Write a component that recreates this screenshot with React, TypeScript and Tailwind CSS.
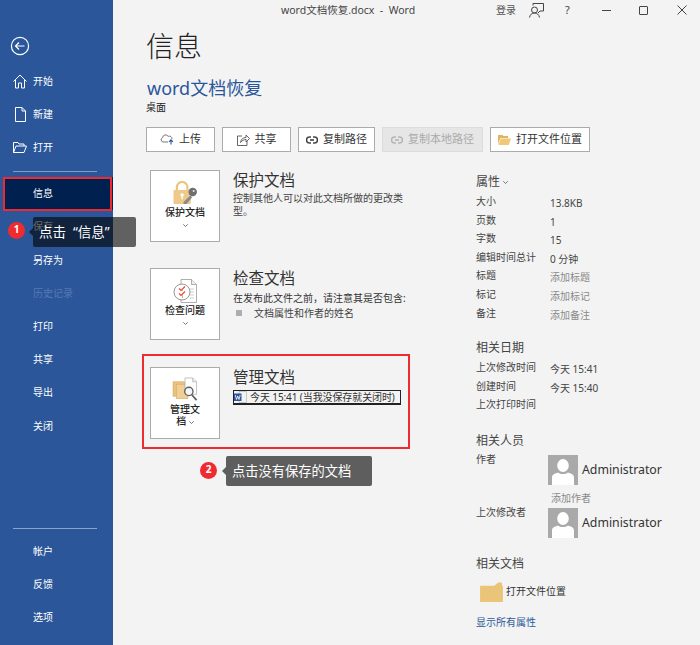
import React from "react";

const FONT = '"Noto Sans", "Noto Sans CJK SC", sans-serif';

function Home() {
  return (
    <svg width="14" height="15" viewBox="0 0 14 15" fill="none" stroke="#fff" strokeWidth="1" className="shrink-0">
      <path d="M0.5 7.5 L7 1 L13.5 7.5" />
      <path d="M2.5 6 V14 H5.5 V9 H8.5 V14 H11.5 V6" />
    </svg>
  );
}
function DocIcon() {
  return (
    <svg width="11" height="15" viewBox="0 0 11 15" fill="none" stroke="#fff" strokeWidth="1" className="shrink-0">
      <path d="M0.5 0.5 H7 L10.5 4 V14.5 H0.5 Z" />
      <path d="M7 0.5 V4 H10.5" />
    </svg>
  );
}
function FolderIcon() {
  return (
    <svg width="14" height="11" viewBox="0 0 14 11" fill="none" stroke="#fff" strokeWidth="1" className="shrink-0">
      <path d="M0.5 10.5 V0.5 H5 L6 2 H11 V4" />
      <path d="M0.5 10.5 L3 4 H13.5 L11 10.5 Z" />
    </svg>
  );
}

function NavItem({ label, icon, dim, active }: { label: string; icon?: React.ReactNode; dim?: boolean; active?: boolean }) {
  return (
    <div className={`h-[33.2px] flex items-center text-[10px] ${dim ? "text-[#5579b3]" : "text-white"} ${active ? "bg-[#002050] ml-[4px] pl-[29px]" : "pl-[33px]"}`}>
      {icon && <span className="w-[14px] -ml-[20px] mr-[6px] flex justify-center">{icon}</span>}
      <span>{label}</span>
    </div>
  );
}

function Sidebar() {
  return (
    <aside className="w-[113px] h-[645px] shrink-0 bg-[#2b579a] flex flex-col">
      <div className="h-[64.6px] pt-[35px] pl-[9px]">
        <svg width="22" height="22" viewBox="0 0 22 22" fill="none" stroke="#fff" strokeWidth="1.2">
          <circle cx="11" cy="11" r="8.6" />
          <path d="M15.5 11 H6.5 M10 7.5 L6.5 11 L10 14.5" />
        </svg>
      </div>
      <NavItem label="开始" icon={<Home />} />
      <NavItem label="新建" icon={<DocIcon />} />
      <NavItem label="打开" icon={<FolderIcon />} />
      <div className="h-px bg-[#7f9cc5] ml-[13px] w-[84px] mt-[7px] mb-[5px]" />
      <NavItem label="信息" active />
      <NavItem label="保存" />
      <NavItem label="另存为" />
      <NavItem label="历史记录" dim />
      <NavItem label="打印" />
      <NavItem label="共享" />
      <NavItem label="导出" />
      <NavItem label="关闭" />
      <div className="h-px bg-[#8aa3c9] ml-[13px] w-[84px] mt-[85px] mb-[6px]" />
      <NavItem label="帐户" />
      <NavItem label="反馈" />
      <NavItem label="选项" />
    </aside>
  );
}

function TitleBar() {
  return (
    <div className="h-[20px] flex items-center text-[#444] relative">
      <div className="absolute left-[168px] top-[2px] text-[10.5px] leading-[16px] whitespace-pre">word文档恢复.docx  -  Word</div>
      <div className="ml-[383px] text-[10px] w-[20px] text-[#555]">登录</div>
      <svg width="15" height="15" viewBox="0 0 15 15" fill="none" stroke="#444" strokeWidth="1" className="ml-[13px]">
        <path d="M4 2.5 V0.5 H14.5 V8 H11 L9 10" />
        <circle cx="5.5" cy="7" r="3" />
        <path d="M0.5 14.5 C1 11.5 3 10 5.5 10 C8 10 10 11.5 10.5 14.5" />
      </svg>
      <span className="ml-[21px] text-[11px] w-[6px] text-[#444]">?</span>
      <div className="ml-[31px] w-[9px] h-px bg-[#444]" />
      <div className="ml-[28px] w-[9px] h-[9px] border border-[#444] rounded-[1px]" />
      <svg width="10" height="10" viewBox="0 0 10 10" stroke="#444" strokeWidth="1" className="ml-[29px]">
        <path d="M0.5 0.5 L9.5 9.5 M9.5 0.5 L0.5 9.5" />
      </svg>
    </div>
  );
}

const LinkIcon = ({ color }: { color: string }) => (
  <svg width="12" height="8" viewBox="0 0 12 8" fill="none" stroke={color} strokeWidth="1.6">
    <path d="M5 1 H3.5 A2.7 2.7 0 0 0 3.5 7 H5" />
    <path d="M7 1 H8.5 A2.7 2.7 0 0 1 8.5 7 H7" />
    <path d="M4 4 H8" />
  </svg>
);

function ToolButton({ w, icon, label, disabled, gap = 5 }: { w: string; icon: React.ReactNode; label: string; disabled?: boolean; gap?: number }) {
  return (
    <div className={`${w} h-[25px] flex items-center justify-center text-[11px] border ${disabled ? "bg-[#e6e6e6] border-[#dcdcdc] text-[#aaa]" : "bg-white border-[#ababab] text-[#333]"}`} style={{ gap }}>
      {icon}
      <span>{label}</span>
    </div>
  );
}

function Toolbar() {
  return (
    <div className="flex gap-[7px] ml-[33px] mt-[13px]">
      <ToolButton
        w="w-[69px]"
        label="上传"
        icon={
          <svg width="14" height="11" viewBox="0 0 14 11" fill="none" stroke="#666" strokeWidth="0.9">
            <path d="M8 8 H3 A2.3 2.3 0 0 1 2.6 3.6 A3 3 0 0 1 8.2 2.4 A2.6 2.6 0 0 1 12 5" />
            <path d="M11 10.5 V6 M9 7.8 L11 5.8 L13 7.8" stroke="#2b579a" strokeWidth="1.1" />
          </svg>
        }
      />
      <ToolButton
        w="w-[69px]"
        label="共享"
        icon={
          <svg width="13" height="13" viewBox="0 0 13 13" fill="none" stroke="#555" strokeWidth="0.9">
            <path d="M5 3 H0.5 V12.5 H10 V8" />
            <path d="M3.5 9.5 C4 6 6 4.5 9 4.5 V2 L12.5 5.5 L9 9 V6.5 C7 6.5 5 7.5 3.5 9.5 Z" />
          </svg>
        }
      />
      <ToolButton w="w-[77px]" label="复制路径" icon={<LinkIcon color="#444" />} />
      <ToolButton w="w-[101px]" label="复制本地路径" icon={<LinkIcon color="#b5b5b5" />} disabled />
      <ToolButton
        w="w-[100px]"
        label="打开文件位置"
        gap={5}
        icon={
          <svg width="13" height="11" viewBox="0 0 13 11">
            <path d="M0 1 H4.5 L5.5 2 H10 V4 H2.5 L0 10 Z" fill="#e2b45f" />
            <path d="M2.8 4.5 H13 L10.8 11 H0.4 Z" fill="#f0c878" />
          </svg>
        }
      />
    </div>
  );
}

const Chevron = () => (
  <svg width="5" height="3" viewBox="0 0 5 3" fill="none" stroke="#555" strokeWidth="0.8" className="inline-block">
    <path d="M0.3 0.3 L2.5 2.5 L4.7 0.3" />
  </svg>
);

function LockIcon() {
  return (
    <svg width="25" height="24" viewBox="0 0 26 25">
      <path d="M4 10 V6.5 A5.5 5.5 0 0 1 15 6.5 V10" fill="none" stroke="#e9c47c" strokeWidth="2.2" />
      <rect x="0.5" y="9.5" width="18" height="14.5" rx="1" fill="#eec987" />
      <circle cx="9.5" cy="14.5" r="1.8" fill="#fff" />
      <rect x="8.8" y="15" width="1.4" height="4" fill="#fff" />
      <path d="M11 22 L18 15 L20 17 L14 24 H11 Z" fill="#8a8a8a" />
      <circle cx="20.5" cy="11.5" r="4.4" fill="#6f6f6f" />
      <circle cx="21.5" cy="10.5" r="1" fill="#eee" />
    </svg>
  );
}
function InspectIcon() {
  return (
    <svg width="24" height="24" viewBox="0 0 24 24">
      <path d="M8 0.5 H18.5 L23.5 5.5 V23.5 H8 Z" fill="#fff" stroke="#9a9a9a" strokeWidth="0.8" />
      <path d="M18.5 0.5 V5.5 H23.5" fill="#eee" stroke="#9a9a9a" strokeWidth="0.8" />
      <path d="M17 10 H21 M17 13 H21 M17 16 H21 M17 19 H21" stroke="#c4c4c4" strokeWidth="0.8" />
      <circle cx="9" cy="13" r="8" fill="#fff" stroke="#8a8a8a" strokeWidth="0.9" />
      <path d="M6 9.5 L8 11.5 L12 7.5 M6 14.5 L8 16.5 L12 12.5" fill="none" stroke="#e8483a" strokeWidth="1.2" />
      <path d="M9.5 11 V12 M9.5 16 V19" stroke="#e8a33a" strokeWidth="0.8" />
    </svg>
  );
}
function ManageIcon() {
  return (
    <svg width="27" height="25" viewBox="0 0 27 26">
      <rect x="0.5" y="5" width="12" height="15" fill="#e9c27e" stroke="#d9a85c" strokeWidth="0.6" />
      <rect x="4" y="7.5" width="12" height="15" fill="#f0cf96" stroke="#d9a85c" strokeWidth="0.6" />
      <path d="M13 1 H21 L25 5 V18 H13 Z" fill="#fff" stroke="#a5a5a5" strokeWidth="0.7" />
      <path d="M21 1 V5 H25" fill="#eee" stroke="#a5a5a5" strokeWidth="0.7" />
      <circle cx="17" cy="15" r="4.3" fill="#f7f7f7" stroke="#5f5f5f" strokeWidth="1.4" />
      <path d="M20 18.5 L25 24" stroke="#5f5f5f" strokeWidth="1.8" />
    </svg>
  );
}

function Section({
  icon,
  label,
  title,
  children,
  className = "",
  wrapLabel,
}: {
  icon: React.ReactNode;
  label: string;
  title: string;
  children: React.ReactNode;
  className?: string;
  wrapLabel?: boolean;
}) {
  return (
    <section className={`flex ${className}`}>
      <div className="w-[70px] h-[72px] shrink-0 bg-white border border-[#ababab] flex flex-col items-center pt-[9px]">
        <div className="h-[25px] flex items-end">{icon}</div>
        {wrapLabel ? (
          <div className="text-[10px] leading-[12px] text-[#222] text-center mt-[1px] w-[34px] font-medium">
            管理文<br />档 <Chevron />
          </div>
        ) : (
          <>
            <div className="text-[10px] leading-[13px] text-[#222] mt-[1px] font-medium">{label}</div>
            <div className="leading-[8px] mt-[1px]"><Chevron /></div>
          </>
        )}
      </div>
      <div className="ml-[13px]">
        <h2 className="text-[15.5px] leading-[20px] text-[#333]">{title}</h2>
        {children}
      </div>
    </section>
  );
}

function LeftColumn() {
  return (
    <div className="w-[363px] pl-[37px] pt-[18px] relative">
      <Section icon={<LockIcon />} label="保护文档" title="保护文档">
        <p className="text-[10px] leading-[13px] text-[#444] w-[172px] mt-[2px]">控制其他人可以对此文档所做的更改类型。</p>
      </Section>
      <Section icon={<InspectIcon />} label="检查问题" title="检查文档" className="mt-[26px]">
        <p className="text-[10px] leading-[14px] text-[#333] mt-[3px] whitespace-nowrap">在发布此文件之前，请注意其是否包含:</p>
        <div className="flex items-center mt-[1px] text-[10px] leading-[14px] text-[#444]">
          <span className="w-[6px] h-[6px] bg-[#adadad] ml-[3px] mr-[12px]" />
          文档属性和作者的姓名
        </div>
      </Section>
      <Section icon={<ManageIcon />} label="管理文档" title="管理文档" className="mt-[27px]" wrapLabel>
        <div className="mt-[3px] flex items-center w-[168px] h-[15px] border-x border-t border-b-2 border-[#222] text-[10px] text-[#333] whitespace-nowrap">
          <svg width="13" height="12" viewBox="0 0 13 12" className="shrink-0">
            <rect x="5" y="0.5" width="7.5" height="11" fill="#f2f2f2" stroke="#b5b5b5" strokeWidth="0.7" />
            <rect x="0" y="2.5" width="7.5" height="7.5" fill="#2b579a" />
            <path d="M1.3 4 L2.5 8.5 L3.7 5 L5 8.5 L6.2 4" fill="none" stroke="#fff" strokeWidth="0.8" />
          </svg>
          <span className="ml-[3px] tracking-[-0.1px]">今天 15:41 (当我没保存就关闭时)</span>
        </div>
      </Section>
    </div>
  );
}

function Row({ k, v, muted }: { k: string; v?: string; muted?: boolean }) {
  return (
    <div className="flex h-[18.6px] text-[10px] leading-[14px]">
      <span className="w-[74px] text-[#444] shrink-0 whitespace-nowrap">{k}</span>
      {v && <span className={`mt-[2px] whitespace-nowrap ${muted ? "text-[#8a8a8a]" : "text-[#444]"}`}>{v}</span>}
    </div>
  );
}

function Avatar() {
  return (
    <svg width="30" height="30" viewBox="0 0 30 30" className="shrink-0">
      <rect width="30" height="30" fill="#a9a9a9" />
      <ellipse cx="15" cy="10.5" rx="5.8" ry="6.5" fill="#fff" />
      <path d="M4 30 V22.5 C4 19.5 7 18.5 10 17.5 C12.5 19.5 17.5 19.5 20 17.5 C23 18.5 26 19.5 26 22.5 V30 Z" fill="#fff" />
    </svg>
  );
}

function RightColumn() {
  return (
    <div className="flex-1 pt-[18px]">
      <div className="text-[12px] leading-[16px] text-[#444] mb-[4px] mt-[4px]">属性 <Chevron /></div>
      <Row k="大小" v="13.8KB" />
      <Row k="页数" v="1" />
      <Row k="字数" v="15" />
      <Row k="编辑时间总计" v="0 分钟" />
      <Row k="标题" v="添加标题" muted />
      <Row k="标记" v="添加标记" muted />
      <Row k="备注" v="添加备注" muted />
      <div className="text-[12px] leading-[16px] text-[#444] mt-[16px] mb-[4px]">相关日期</div>
      <Row k="上次修改时间" v="今天 15:41" />
      <Row k="创建时间" v="今天 15:40" />
      <Row k="上次打印时间" />
      <div className="text-[12px] leading-[16px] text-[#444] mt-[17px] mb-[6px]">相关人员</div>
      <div className="flex h-[32px] text-[10px] leading-[14px]">
        <span className="w-[72px] text-[#444] -mt-[3px]">作者</span>
        <Avatar />
        <span className="ml-[4px] text-[12.3px] leading-[29px] text-[#333]">Administrator</span>
      </div>
      <div className="text-[10px] leading-[14px] text-[#8a8a8a] pl-[75px] mt-[4px]">添加作者</div>
      <div className="flex h-[30px] text-[10px] leading-[14px] mt-[3px]">
        <span className="w-[72px] text-[#444] -mt-[3px]">上次修改者</span>
        <Avatar />
        <span className="ml-[4px] text-[12.3px] leading-[29px] text-[#333]">Administrator</span>
      </div>
      <div className="text-[12px] leading-[16px] text-[#444] mt-[18px]">相关文档</div>
      <div className="flex items-center mt-[10px] ml-[4px] text-[10px] text-[#333]">
        <svg width="23" height="20" viewBox="0 0 24 21" className="shrink-0">
          <path d="M0 4 H15 L19 0.5 H23 V4 H24 V21 H0 Z" fill="#eac479" />
        </svg>
        <span className="ml-[3px]">打开文件位置</span>
      </div>
      <div className="text-[10px] leading-[14px] text-[#2b579a] mt-[13px]">显示所有属性</div>
    </div>
  );
}

function Badge({ n, className }: { n: string; className: string }) {
  return (
    <div className={`absolute w-[17px] h-[17px] rounded-full bg-[#f02b30] text-white text-[10px] leading-[15px] text-center font-bold ${className}`}>{n}</div>
  );
}

export default function App() {
  return (
    <div className="relative w-[700px] h-[645px] overflow-hidden bg-[#f3f3f3] flex" style={{ fontFamily: FONT }}>
      <Sidebar />
      <main className="flex-1 min-w-0">
        <TitleBar />
        <h1 className="ml-[33px] mt-[9px] text-[28px] leading-[34px] text-[#222] font-light">信息</h1>
        <div className="ml-[34px] mt-[13px] text-[18px] leading-[24px] text-[#2b579a]">word文档恢复</div>
        <div className="ml-[33px] text-[10px] leading-[14px] text-[#222]">桌面</div>
        <Toolbar />
        <div className="flex">
          <LeftColumn />
          <RightColumn />
        </div>
      </main>

      {/* annotations */}
      <div className="absolute left-[3px] top-[177px] w-[109px] h-[34px] border-2 border-[#ed2a30]" />
      <div className="absolute left-[142px] top-[354px] w-[268px] h-[95px] border-2 border-[#f02b30]" />

      <Badge n="1" className="left-[8px] top-[222px]" />
      <div className="absolute left-[29px] top-[228px] w-0 h-0 border-y-[4px] border-y-transparent border-r-[4px] border-r-[#11223c]" />
      <div className="absolute left-[33px] top-[217px] w-[103px] h-[30px] rounded-[2px] bg-black/60 text-white text-[13.5px] leading-[30px] pl-[6px] whitespace-pre">点击  “信息”</div>

      <Badge n="2" className="left-[200px] top-[462px]" />
      <div className="absolute left-[222px] top-[467px] w-0 h-0 border-y-[4px] border-y-transparent border-r-[4px] border-r-[#5e5e5e]" />
      <div className="absolute left-[226px] top-[456px] w-[146px] h-[30px] rounded-[2px] bg-[#5e5e5e] text-white text-[13.25px] leading-[30px] pl-[6px] whitespace-nowrap">点击没有保存的文档</div>
    </div>
  );
}
